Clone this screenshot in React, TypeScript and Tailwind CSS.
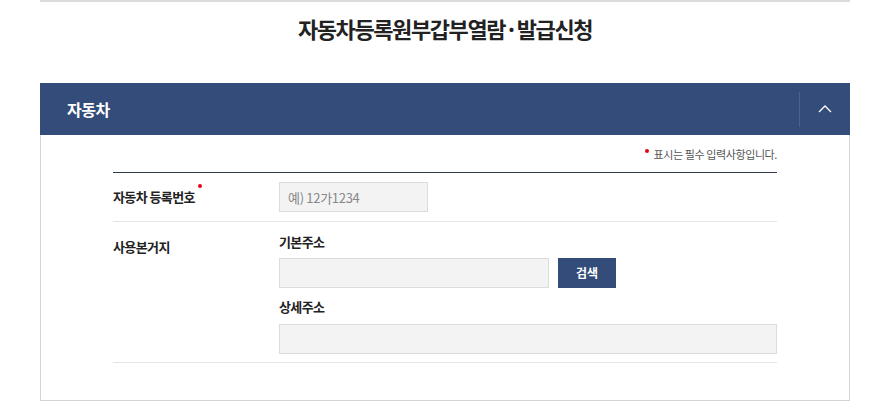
export default function App() {
  const font = { fontFamily: '"Noto Sans CJK KR", "Noto Sans", sans-serif' };
  return (
    <div className="min-h-[420px] w-[869px] bg-white text-[#222]" style={font}>
      <div className="ml-[40px] w-[810px]">
        <div className="border-t-2 border-[#dcdcdc]" />

        {/* Page title */}
        <h1 className="mt-[9px] text-center text-[22px] font-bold leading-[34px] tracking-[-1.4px] text-[#222]">
          자동차등록원부갑부열람·발급신청
        </h1>

        {/* Card */}
        <section className="mt-[38px]">
          <div className="flex h-[52px] items-center bg-[#344c79]">
            <h2 className="flex-1 pl-[27px] text-[16px] font-bold tracking-[-0.5px] text-white">자동차</h2>
            <div className="h-[35px] w-px bg-[#4b6290]" />
            <button className="flex h-full w-[50px] items-center justify-center" aria-label="접기">
              <svg width="14" height="8" viewBox="0 0 14 8" fill="none">
                <polyline points="1,7 7,1 13,7" stroke="white" strokeWidth="1.3" />
              </svg>
            </button>
          </div>

          <div className="border-x border-b border-[#d5d5d5] px-[72px] pb-[37px] pt-[11px]">
            <p className="text-right text-[11px] leading-[16px] tracking-[-0.4px] text-[#555]">
              <span className="relative -top-[6px] mr-[5px] inline-block h-[4px] w-[4px] rounded-full bg-[#e60012]" />
              표시는 필수 입력사항입니다.
            </p>
            <div className="mt-[10px] border-t border-[#333a4d]" />

            {/* 자동차 등록번호 */}
            <div className="flex items-center border-b border-[#e5e5e5] py-[9px]">
              <div className="w-[166px] text-[13px] font-bold tracking-[-0.6px] text-[#222]">
                자동차 등록번호
                <span className="relative -top-[14px] ml-[3px] inline-block h-[4px] w-[4px] rounded-full bg-[#e60012]" />
              </div>
              <input
                placeholder="예) 12가1234"
                className="h-[30px] w-[149px] border border-[#dcdcdc] bg-[#f3f3f3] px-[8px] text-[13px] tracking-[-0.3px] text-[#333] outline-none placeholder:text-[#888]"
              />
            </div>

            {/* 사용본거지 */}
            <div className="flex border-b border-[#e5e5e5] pb-[8px] pt-[11px]">
              <div className="w-[166px] pt-[4px] text-[13px] font-bold tracking-[-0.6px] text-[#222]">사용본거지</div>
              <div className="flex-1">
                <p className="text-[13px] font-bold leading-[18px] tracking-[-0.6px] text-[#222]">기본주소</p>
                <div className="mt-[7px] flex gap-[9px]">
                  <input className="h-[30px] w-[270px] border border-[#dcdcdc] bg-[#f3f3f3] outline-none" />
                  <button className="h-[30px] w-[58px] bg-[#344c79] text-[12px] font-bold text-white">검색</button>
                </div>
                <p className="mt-[10px] text-[13px] font-bold leading-[18px] tracking-[-0.6px] text-[#222]">상세주소</p>
                <input className="mt-[8px] h-[30px] w-full border border-[#dcdcdc] bg-[#f3f3f3] outline-none" />
              </div>
            </div>
          </div>
        </section>
      </div>
    </div>
  );
}
